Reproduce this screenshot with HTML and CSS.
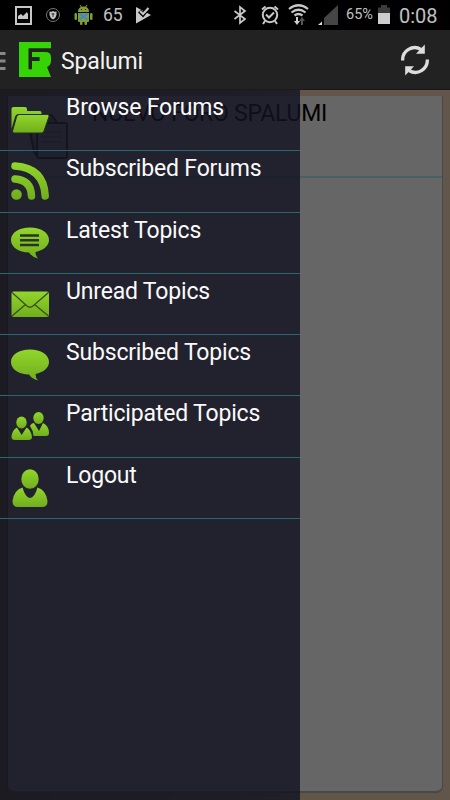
FILE: index.html
```
<!DOCTYPE html>
<html lang="en">
<head>
<meta charset="utf-8">
<title>Spalumi</title>
<link rel="stylesheet" href="styles.css">
</head>
<body>
<svg class="defs" width="0" height="0"><defs><linearGradient id="g" x1="0" y1="0" x2="0" y2="1"><stop offset="0" stop-color="#92d62c"/><stop offset="1" stop-color="#71ad1d"/></linearGradient><linearGradient id="gr" gradientUnits="userSpaceOnUse" x1="0" y1="11" x2="0" y2="49"><stop offset="0" stop-color="#92d62c"/><stop offset="1" stop-color="#71ad1d"/></linearGradient></defs></svg>
<header class="status">
  <svg class="status-left" width="96" height="30" viewBox="0 0 96 30">
    <path d="M16 7H31V24H16Z" fill="none" stroke="#c8c8c8" stroke-width="2"/>
    <path d="M18 19V16L21 14L23 16L27 12L28 14V19Z" fill="#c8c8c8"/>
    <circle cx="53" cy="15" r="6.5" fill="none" stroke="#777" stroke-width="1"/>
    <path d="M49.500 11.500Q52 12 53 11Q54 12 56.500 11.500V15Q56 18 53 19.500Q50 18 49.500 15Z" fill="#c5c5c5"/><path d="M53 13V17M51.500 14H54.500" stroke="#333" fill="none"/>
    <g fill="#849c32"><path d="M78 12Q78 6.500 83.500 6.500Q89 6.500 89 12Z"/><path d="M78 13H89V21Q89 22 88 22H79Q78 22 78 21Z"/><rect x="74.500" y="13" width="2.500" height="7" rx="1.200"/><rect x="90" y="13" width="2.500" height="7" rx="1.200"/><rect x="80" y="21" width="2.500" height="4" rx="1"/><rect x="84.500" y="21" width="2.500" height="4" rx="1"/></g>
    <path d="M80 5L82 8M87 5L85 8" stroke="#849c32" fill="none"/><path d="M81 9.500H82M85 9.500H86" stroke="#222"/>
    <path d="M79.500 13.500L87.500 19.500M87.500 13.500L79.500 19.500" stroke="#4789bd" stroke-width="2.200"/>
  </svg>
  <span class="count">65</span>
  <svg class="play" width="18" height="30" viewBox="0 0 18 30"><path d="M1 7L16 15L1 23.500Z" fill="#c8c8c8"/><path d="M4.500 11L8 14.500L13.500 8" fill="none" stroke="#000" stroke-width="4"/><path d="M5 11L8 14L13.500 8" fill="none" stroke="#c8c8c8" stroke-width="2"/></svg>
  <svg class="status-right" width="110" height="30" viewBox="230 0 110 30">
    <g fill="none" stroke="#c8c8c8" stroke-width="1.700"><path d="M234.500 11L245 19L240 23V7L245 11L234.500 19"/>
    <circle cx="270" cy="15" r="7.200" stroke-width="2"/><path d="M266 14.500L269 17.500L274 12.500M262 9.500L265.500 6.500M278 9.500L274.500 6.500M265 21L263 24M275 21L277 24" stroke-width="2"/>
    <path d="M289 9Q298.500 1.500 308 9M291.500 12.500Q298.500 7 305.500 12.500M294.500 15.500Q298.500 12.500 302.500 15.500" stroke-width="2.200"/></g>
    <path d="M296 17H298V21H300L297 25L294 21H296Z" fill="#d0d0d0"/><path d="M301 25V21H299L302 17L305 21H303V25Z" fill="#555"/>
    <path d="M338 5V25H324V18Z" fill="#464646"/><path d="M318 25L322 21.500V25Z" fill="#ddd"/>
  </svg>
  <span class="percent">65%</span>
  <svg class="battery" width="14" height="30" viewBox="0 0 14 30"><path d="M4 5H10V7.500H13V13H1V7.500H4Z" fill="#3b3b3b"/><path d="M1 13H13V24H1Z" fill="#cdcdcd"/></svg>
  <span class="clock">0:08</span>
</header>
<div class="bar">
  <svg class="brand" width="54" height="60" viewBox="0 0 54 60">
    <path d="M0 23.500H5.500M0 31H5.500M0 38.500H5.500" stroke="#888" stroke-width="2.800"/>
    <path d="M19 12H51V18.500H28.700V39.300H32V31H39.500V27.300H32V22H45Q51 22 51 27V31Q51 35 47 37L51 47H19Z" fill="#36d406"/>
    <path d="M32 31H39.500V27H32V22H44V47H28.700V39.300H32Z" fill="#36d406"/>
    <path d="M28.700 18.500H51V21.500H32V27.300H39.500V31H32V39.300H28.700Z" fill="#222"/>
  </svg>
  <h1>Spalumi</h1>
  <svg class="refresh" width="32" height="32" viewBox="0 0 32 32"><g id="arrow"><path d="M3.700 16.500A12 12 0 0 1 22 5.500" fill="none" stroke="#ddd" stroke-width="3.300"/><path d="M25.800 0.500V9.700H17Z" fill="#ddd"/></g><use href="#arrow" transform="rotate(180 16 16)"/></svg>
</div>
<main>
  <section class="card">
    <div class="forum">
      <svg class="docs" width="72" height="80" viewBox="0 0 72 80"><path d="M19 21L42 19Q45 19 49 27M19 21L26 56Q27 59 31 60" fill="#4b4b50" stroke="#222" stroke-width="2"/><rect x="29" y="27" width="30" height="35" rx="2" fill="#626264" stroke="#222" stroke-width="2"/><path d="M33 36H54M33 41H54M33 46H54" stroke="#3a3a3a"/></svg>
      <h2>NUEVO FORO SPALUMI</h2>
    </div>
  </section>
  <nav class="drawer">
    <a class="item"><svg class="icon" viewBox="8 0 44 60"><path d="M11.500 39V19Q11.500 17 13.500 17H25Q27 17 27 19V21H40Q41.500 21 41.500 22.500V24H19Q16 24 15 27Z" fill="url(#g)"/><path d="M19.500 24.500H47.500Q49.500 24.500 49 26.500L44 41Q43.500 43 41.500 43H14Q12 43 12.500 41L16.500 27Q17 24.500 19.500 24.500Z" fill="url(#g)" stroke="#22301c" stroke-width="1"/></svg><span>Browse Forums</span></a>
    <a class="item"><svg class="icon" viewBox="8 0 44 60"><circle cx="16.500" cy="43.500" r="5.300" fill="url(#gr)"/><path d="M15 28Q31 29 31.500 45M15 15Q44 17 45.200 45" fill="none" stroke="url(#gr)" stroke-width="7.500" stroke-linecap="round"/></svg><span>Subscribed Forums</span></a>
    <a class="item"><svg class="icon" viewBox="8 0 44 60"><path d="M30 14.500C41 14.500 49 19.500 49 27C49 33 43 37.500 35.500 39Q35.500 43 38 45.500Q32 44 29 39.500C19 39.500 11 34.500 11 27C11 19.500 19 14.500 30 14.500Z" fill="url(#g)"/><path d="M20 22.500H39M20 27.300H39M20 32H39" stroke="#293420" stroke-width="2.600"/></svg><span>Latest Topics</span></a>
    <a class="item"><svg class="icon" viewBox="8 0 44 60"><rect x="11.500" y="17.500" width="37.500" height="25.500" rx="2" fill="url(#g)"/><path d="M12 18.500L27 32Q30 34.500 33 32L48.500 18.500M12 42L25.500 30.500M48.500 42L34.500 30.500" fill="none" stroke="#37501d" stroke-width="1.300"/></svg><span>Unread Topics</span></a>
    <a class="item"><svg class="icon" viewBox="8 0 44 60"><path d="M30 14.500C41 14.500 49 19.500 49 27C49 33 43 37.500 35.500 39Q35.500 43 38 45.500Q32 44 29 39.500C19 39.500 11 34.500 11 27C11 19.500 19 14.500 30 14.500Z" fill="url(#g)"/></svg><span>Subscribed Topics</span></a>
    <a class="item"><svg class="icon" viewBox="8 0 44 60"><ellipse cx="38.500" cy="22" rx="5.200" ry="6" fill="url(#g)"/><path d="M30.500 29Q32 27 34 27L39 35L43 27Q49 30 49 37Q49 40 46 40H33.500Q33 34 30 30Z" fill="url(#g)"/><ellipse cx="21.500" cy="26.500" rx="5.200" ry="6" fill="url(#g)"/><path d="M17 31.500Q12 34 11.500 41Q11.500 44 15 44H28.500Q32 44 32 41Q31 34 26.500 31.500L21.700 39Z" fill="url(#g)"/></svg><span>Participated Topics</span></a>
    <a class="item"><svg class="icon" viewBox="8 0 44 60"><ellipse cx="30" cy="21" rx="8.700" ry="9.800" fill="url(#g)"/><path d="M22.500 29.500Q14 32 12.500 43Q12.500 49 18 49H42Q47.700 49 47.500 43Q46 32 37.500 29.500Q34.500 40 30 40Q25.500 40 22.500 29.500Z" fill="url(#g)"/></svg><span>Logout</span></a>
  </nav>
</main>
</body>
</html>
```
FILE: styles.css
```
* { box-sizing: border-box; }
body { margin: 0; width: 450px; height: 800px; overflow: hidden; display: flex; flex-direction: column; background: #000; font-family: Roboto, "Liberation Sans", sans-serif; }
svg { display: block; flex: none; }
.defs { position: absolute; }
h1, h2 { margin: 0; font-weight: 400; }
.status { height: 30px; flex: none; display: flex; align-items: center; color: #c0c0c0; line-height: 30px; white-space: nowrap; }
.count { width: 32px; margin-left: 7px; font-size: 17.5px; }
.status-right { margin-left: 77px; }
.percent { width: 30px; margin-left: 6px; font-size: 14.5px; }
.battery { margin-left: 1px; }
.clock { margin-left: 8px; font-size: 20px; padding-top: 1px; }
.bar { height: 60px; flex: none; display: flex; align-items: center; background: #222; border-bottom: 1px solid #1d191a; }
.bar h1 { margin-left: 7px; flex: 1; font-size: 23px; letter-spacing: -.15px; color: #f3f3f3; line-height: 60px; padding-top: 4px; }
.refresh { margin-right: 19px; }
main { position: relative; flex: 1; padding: 6px 7px 7px; background: linear-gradient(90deg, #4a4228, #50483c 50%, #615647 67%, #615649); }
.card { height: 697px; background: #666; border-right: 1px solid #484848; border-left: 1px solid #303030; border-bottom: 2px solid #484846; border-radius: 2px 2px 7px 7px; }
.forum { display: flex; height: 82px; border-bottom: 2px solid #476164; }
.forum h2 { margin-left: 12px; font-size: 23px; letter-spacing: -.24px; line-height: 35px; color: #000; white-space: nowrap; }
.drawer { position: absolute; left: 0; top: 0; bottom: 0; width: 300px; background: rgba(17, 17, 33, .8); }
.item { display: flex; height: 61.25px; border-bottom: 1px solid #28696f; color: #fafafa; }
.icon { width: 44px; height: 60px; margin-left: 8px; }
.item span { margin-left: 14px; font-size: 23px; letter-spacing: -.18px; line-height: 36px; white-space: nowrap; }
```
